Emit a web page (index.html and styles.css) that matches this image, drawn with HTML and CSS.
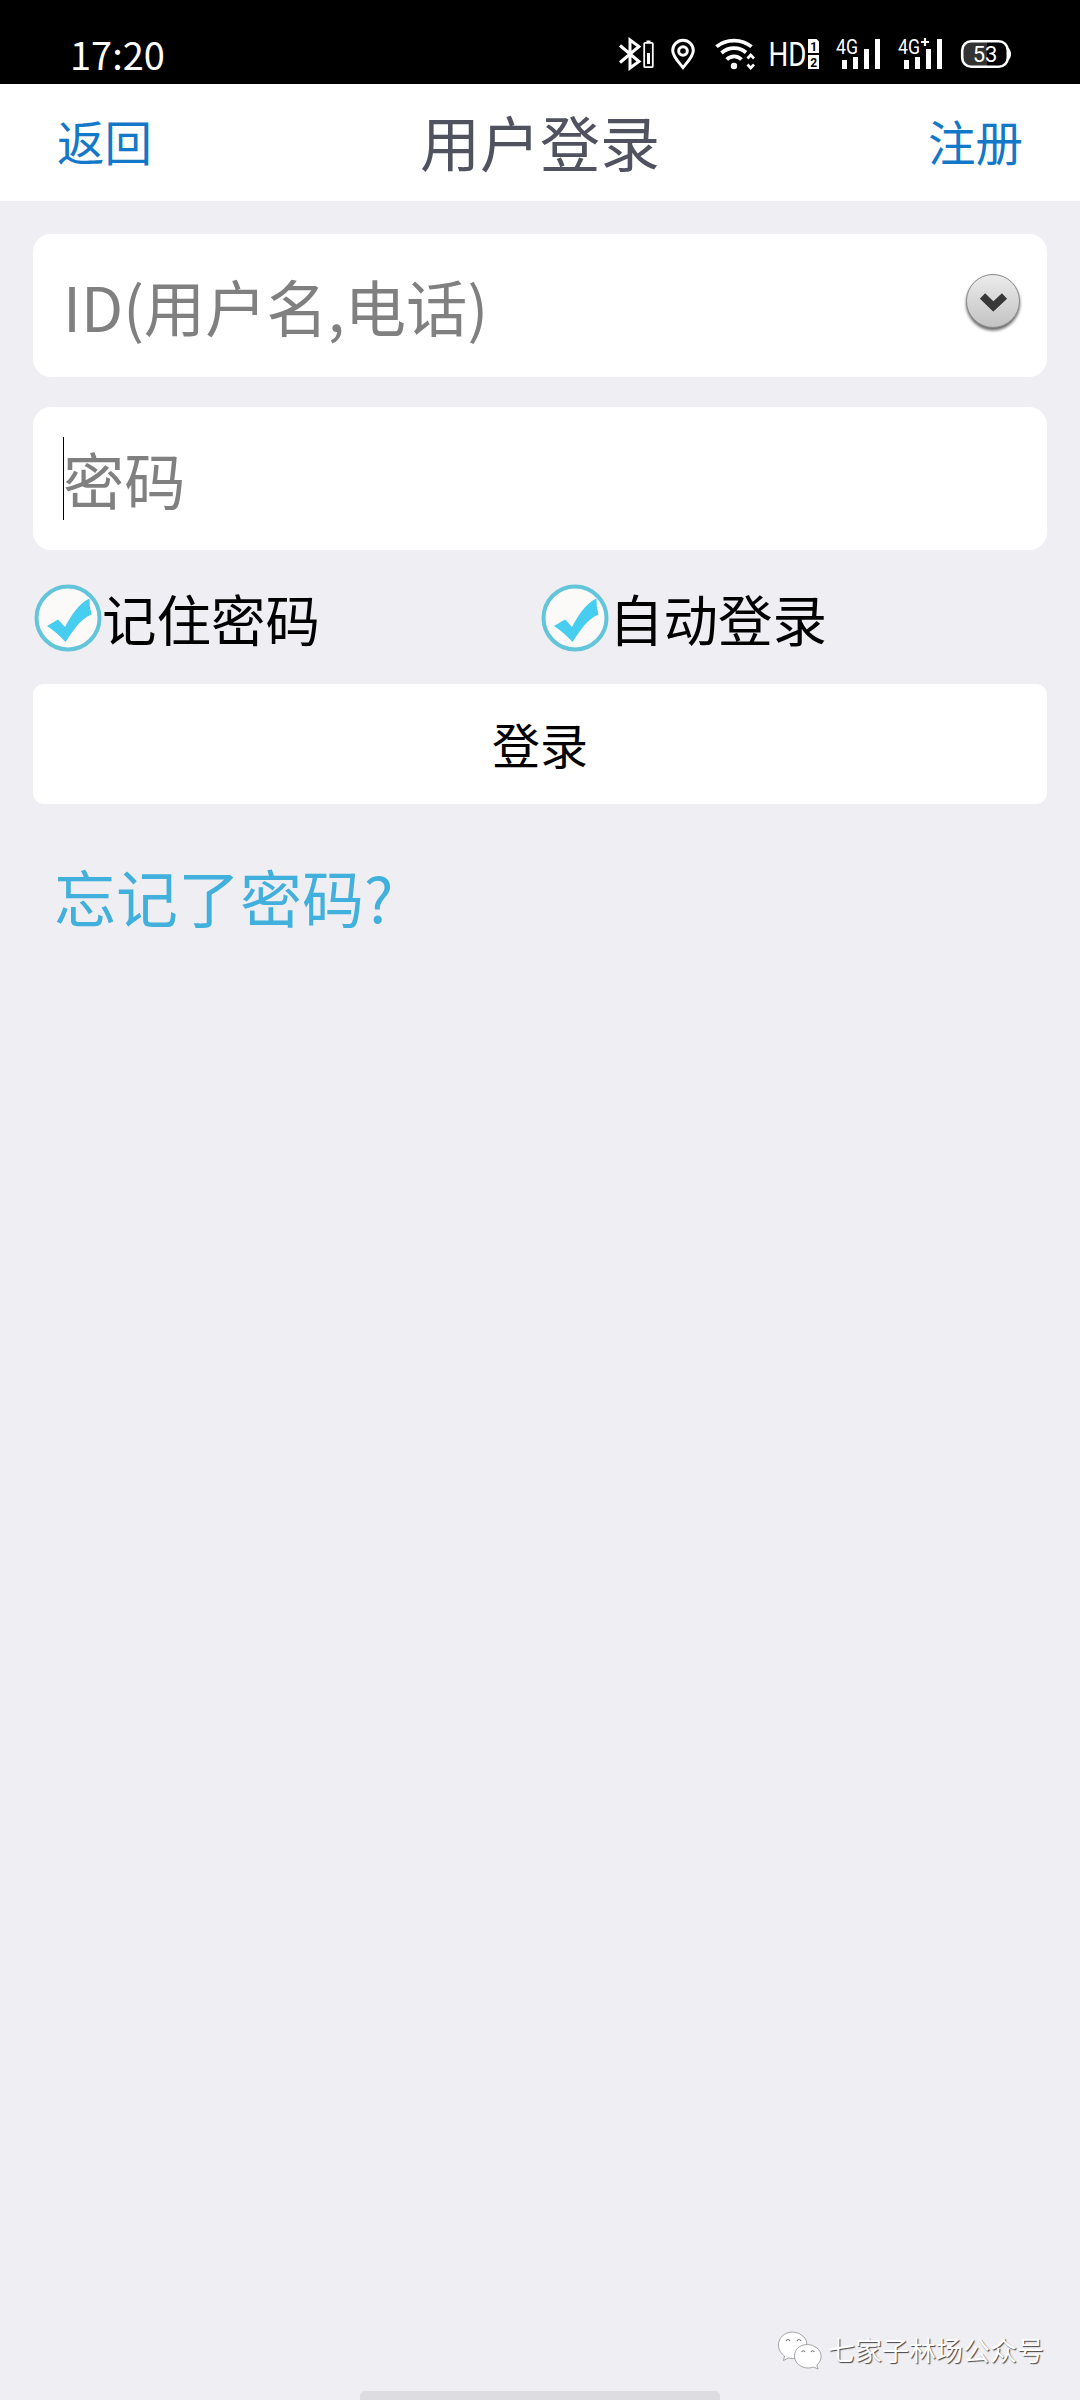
FILE: index.html
```
<!DOCTYPE html>
<html lang="zh-CN">
<head>
    <meta charset="UTF-8">
    <meta name="viewport" content="width=device-width, initial-scale=1.0">
    <title>用户登录</title>
    <link rel="stylesheet" href="styles.css">
</head>
<body>
    <div class="status-bar">
        <span class="time">17:20</span>
        <div class="status-icons">
            <svg class="bluetooth" width="38" height="36" viewBox="0 0 38 36">
                <path d="M2 9.5L21 25.5L12 32V4L21 10.5L2 26.5" fill="none" stroke="#fff" stroke-width="3"/>
                <rect x="26.2" y="6.8" width="8.6" height="24.4" rx="1" fill="none" stroke="#fff" stroke-width="1.8"/>
                <path d="M28.5 4.5h4v2h-4zM29 17h3v11h-3z" fill="#fff"/>
            </svg>
            <svg class="location" width="26" height="36" viewBox="0 0 26 36">
                <path d="M13 31.5C9 26.5 2.7 20.5 2.7 14.5A10.3 10.3 0 0 1 23.3 14.5C23.3 20.5 17 26.5 13 31.5Z" fill="none" stroke="#fff" stroke-width="3"/>
                <circle cx="13" cy="15" r="4.3" fill="none" stroke="#fff" stroke-width="3"/>
            </svg>
            <svg class="wifi" width="41" height="36" viewBox="0 0 41 36">
                <path d="M1.5 10.7C11 2.5 27 2.5 36.5 10.7M6.5 17C13.5 10.7 24.5 10.7 31 16.5M11.700 23.5C16 19.2 22.5 19.2 26.5 23.5" fill="none" stroke="#fff" stroke-width="3.7"/>
                <circle cx="19" cy="30" r="3.2" fill="#fff"/>
                <path d="M32.5 22.5L35.7 19L39 22.5M32.5 28.5L35.7 32L39 28.5" fill="none" stroke="#fff" stroke-width="2.6"/>
            </svg>
            <svg class="hd" width="51" height="36" viewBox="-2 0 51 36">
                <text class="hd-text" x="-1.5" y="30" textLength="38" lengthAdjust="spacingAndGlyphs">HD</text>
                <path d="M38 3h8.500l2.500 2.500V17H38zM38 19h11v14H38z" fill="#fff"/>
                <text class="sim-text" x="40.2" y="14.5">1</text>
                <text class="sim-text" x="40.2" y="30.5">2</text>
            </svg>
            <svg class="signal" width="46" height="36" viewBox="0 0 46 36">
                <text class="net-text" x="1" y="17.5" textLength="22" lengthAdjust="spacingAndGlyphs">4G</text>
                <path d="M7 24h5v9H7zM18 21h5v12h-5zM29 13h5v20h-5zM40 3h5v30h-5z" fill="#fff"/>
            </svg>
            <svg class="signal" width="46" height="36" viewBox="0 0 46 36">
                <text class="net-text" x="1" y="17.5" textLength="22" lengthAdjust="spacingAndGlyphs">4G</text>
                <path d="M7 24h5v9H7zM18 21h5v12h-5zM29 13h5v20h-5zM40 3h5v30h-5z" fill="#fff"/>
                <path d="M24 6h8M28 2v8" stroke="#fff" stroke-width="2.2"/>
            </svg>
            <svg class="battery" width="52" height="36" viewBox="0 0 52 36">
                <path d="M10 5H27V31H10Q3 31 3 24V12Q3 5 10 5Z" fill="#333"/>
                <rect x="2.2" y="5.2" width="45.600" height="25.6" rx="9" fill="none" stroke="#fff" stroke-width="2.6"/>
                <path d="M48 11.5Q51 14 51 18T48 24.5Z" fill="#fff"/>
                <text class="battery-text" x="25" y="25.5" text-anchor="middle">53</text>
            </svg>
        </div>
    </div>

    <div class="header">
        <a class="nav-link" href="#">返回</a>
        <h1>用户登录</h1>
        <a class="nav-link" href="#">注册</a>
    </div>

    <form class="login-form">
        <div class="field">
            <input type="text" id="username" placeholder="ID(用户名,电话)">
            <svg class="dropdown" width="64" height="66" viewBox="0 0 64 66">
                <defs>
                    <linearGradient id="knob" x1="0" y1="0" x2="0" y2="1">
                        <stop offset="0" stop-color="#ececec"/>
                        <stop offset="1" stop-color="#c2c2c2"/>
                    </linearGradient>
                    <filter id="knobShadow" x="-20%" y="-20%" width="140%" height="140%">
                        <feGaussianBlur stdDeviation="1.5"/>
                    </filter>
                </defs>
                <circle cx="32" cy="33.5" r="27" fill="#444" opacity="0.8" filter="url(#knobShadow)"/>
                <circle cx="32" cy="31" r="26.5" fill="url(#knob)" stroke="#8a8a8a" stroke-width="1"/>
                <path d="M22 27.5L32.3 37.5L42.5 27.5" fill="none" stroke="#fff" stroke-width="7" opacity="0.5"/>
                <path d="M21.5 26L32.3 36.5L43.5 26" fill="none" stroke="#383838" stroke-width="7.5"/>
            </svg>
        </div>
        <div class="field">
            <span class="caret"></span>
            <input type="password" id="password" placeholder="密码">
        </div>

        <div class="options">
            <label class="option">
                <svg width="68" height="68" viewBox="0 0 68 68">
                    <circle cx="34" cy="34" r="31.5" fill="#fbfaf8" stroke="#62c5d9" stroke-width="4"/>
                    <path d="M13 42L24 35.5L31 43C37 32 44 20 55.5 14.5Q55 22 57.5 30.5C46 35 39 47 31.5 58Q23 48.5 13 42Z" fill="#46cdef"/>
                </svg>
                <span>记住密码</span>
            </label>
            <label class="option">
                <svg width="68" height="68" viewBox="0 0 68 68">
                    <circle cx="34" cy="34" r="31.5" fill="#fbfaf8" stroke="#62c5d9" stroke-width="4"/>
                    <path d="M13 42L24 35.5L31 43C37 32 44 20 55.5 14.5Q55 22 57.5 30.5C46 35 39 47 31.5 58Q23 48.5 13 42Z" fill="#46cdef"/>
                </svg>
                <span>自动登录</span>
            </label>
        </div>

        <button type="submit">登录</button>
        <a class="forgot" href="#">忘记了密码?</a>
    </form>

    <div class="footer">
        <div class="account">
            <svg width="46" height="40" viewBox="0 0 46 40">
                <g fill="#fff" stroke="#8f8f93" stroke-width="0.8">
                    <path d="M16 2C7 2 1.5 8 1.5 15C1.5 20 4 23.5 7.5 26L6.5 30.5L11.5 28Q20 30 26 25C31 20 31 11 27 7Q22 2 16 2Z"/>
                    <path d="M30.5 14.5C22 14.5 17.5 20 17.5 26C17.5 33 24 38 31 38Q34 38 36.5 37L41 39L39.8 35C46 30 45 22 40 18Q36 14.5 30.5 14.5Z"/>
                </g>
                <path d="M9 11q2-3 4 0M20 11q2-3 4 0M24.5 22q1.700-2.500 3.400 0M34 22q1.700-2.500 3.400 0" fill="none" stroke="#77777b" stroke-width="1.2"/>
            </svg>
            <span>七家子林场公众号</span>
        </div>
        <div class="home-bar"></div>
    </div>

    <script>
        document.querySelector('.login-form').addEventListener('submit', function(e) {
            e.preventDefault();
        });
    </script>
</body>
</html>
```
FILE: styles.css
```
* {
    box-sizing: border-box;
}
body {
    font-family: "Noto Sans CJK SC", sans-serif;
    background-color: #efeef3;
    display: flex;
    flex-direction: column;
    height: 2400px;
    margin: 0;
    overflow: hidden;
}
a {
    text-decoration: none;
}
svg {
    display: block;
    flex: none;
}

/* status bar */
.status-bar {
    background: #000;
    color: #fff;
    display: flex;
    justify-content: space-between;
    align-items: flex-start;
    height: 84px;
    padding: 36px 68px 0 70px;
}
.time {
    font-size: 38px;
    line-height: 36px;
}
.status-icons {
    display: flex;
}
.location {
    margin-left: 14px;
}
.wifi {
    margin-left: 19px;
}
.hd {
    margin-left: 12px;
}
.signal {
    margin-left: 16px;
}
.battery {
    margin-left: 17px;
}
.status-icons text {
    fill: #fff;
}
.hd-text {
    font-family: Roboto, sans-serif;
    font-size: 33px;
}
.status-icons .sim-text {
    fill: #000;
    font-family: Roboto, sans-serif;
    font-size: 12px;
    font-weight: bold;
}
.net-text {
    font-family: Roboto, sans-serif;
    font-size: 20px;
}
.battery-text {
    font-family: Roboto, sans-serif;
    font-size: 22px;
}

/* title bar */
.header {
    background: white;
    display: flex;
    justify-content: space-between;
    align-items: center;
    height: 117px;
    padding: 0 57px 3px;
}
h1 {
    color: #50535f;
    font-size: 60px;
    font-weight: normal;
    line-height: 90px;
    margin: 0;
}
.nav-link {
    color: #1478c8;
    font-size: 47.5px;
    line-height: 72px;
}

/* form */
.login-form {
    display: flex;
    flex-direction: column;
    padding: 33px 33px 0;
}
.field {
    background: white;
    border-radius: 18px;
    display: flex;
    align-items: center;
    height: 143px;
    margin-bottom: 30px;
    padding: 0 22px 0 30px;
}
.field input {
    background: none;
    border: none;
    flex: 1;
    font-family: inherit;
    font-size: 61.3px;
    height: 92px;
    outline: none;
    padding: 0;
}
.field input::placeholder {
    color: #808080;
}
.dropdown {
    margin-bottom: 6px;
}
.caret {
    background: #000;
    height: 83px;
    margin-right: -1px;
    width: 1px;
}
.options {
    display: grid;
    grid-template-columns: 1fr 1fr;
    margin-top: 4px;
}
.option {
    display: flex;
    align-items: center;
    font-size: 54.5px;
    height: 68px;
    line-height: 68px;
    padding-left: 1px;
}
button {
    background: white;
    border: none;
    border-radius: 11px;
    color: #000;
    font-family: inherit;
    font-size: 48px;
    height: 120px;
    margin-top: 32px;
    padding: 0 0 3px;
}
.forgot {
    align-self: flex-start;
    color: #42b0dd;
    font-size: 62px;
    line-height: 90px;
    margin: 47px 0 0 21px;
}

/* bottom */
.footer {
    display: flex;
    flex-direction: column;
    align-items: center;
    margin-top: auto;
}
.account {
    align-self: flex-end;
    color: #fff;
    display: flex;
    align-items: center;
    font-size: 27px;
    line-height: 40px;
    margin-bottom: 21px;
    padding-right: 36px;
    text-shadow: 1px 1px 1px #444;
}
.account span {
    margin-left: 5px;
}
.home-bar {
    background: #dddce1;
    border-radius: 5px 5px 0 0;
    height: 9px;
    width: 360px;
}
```
